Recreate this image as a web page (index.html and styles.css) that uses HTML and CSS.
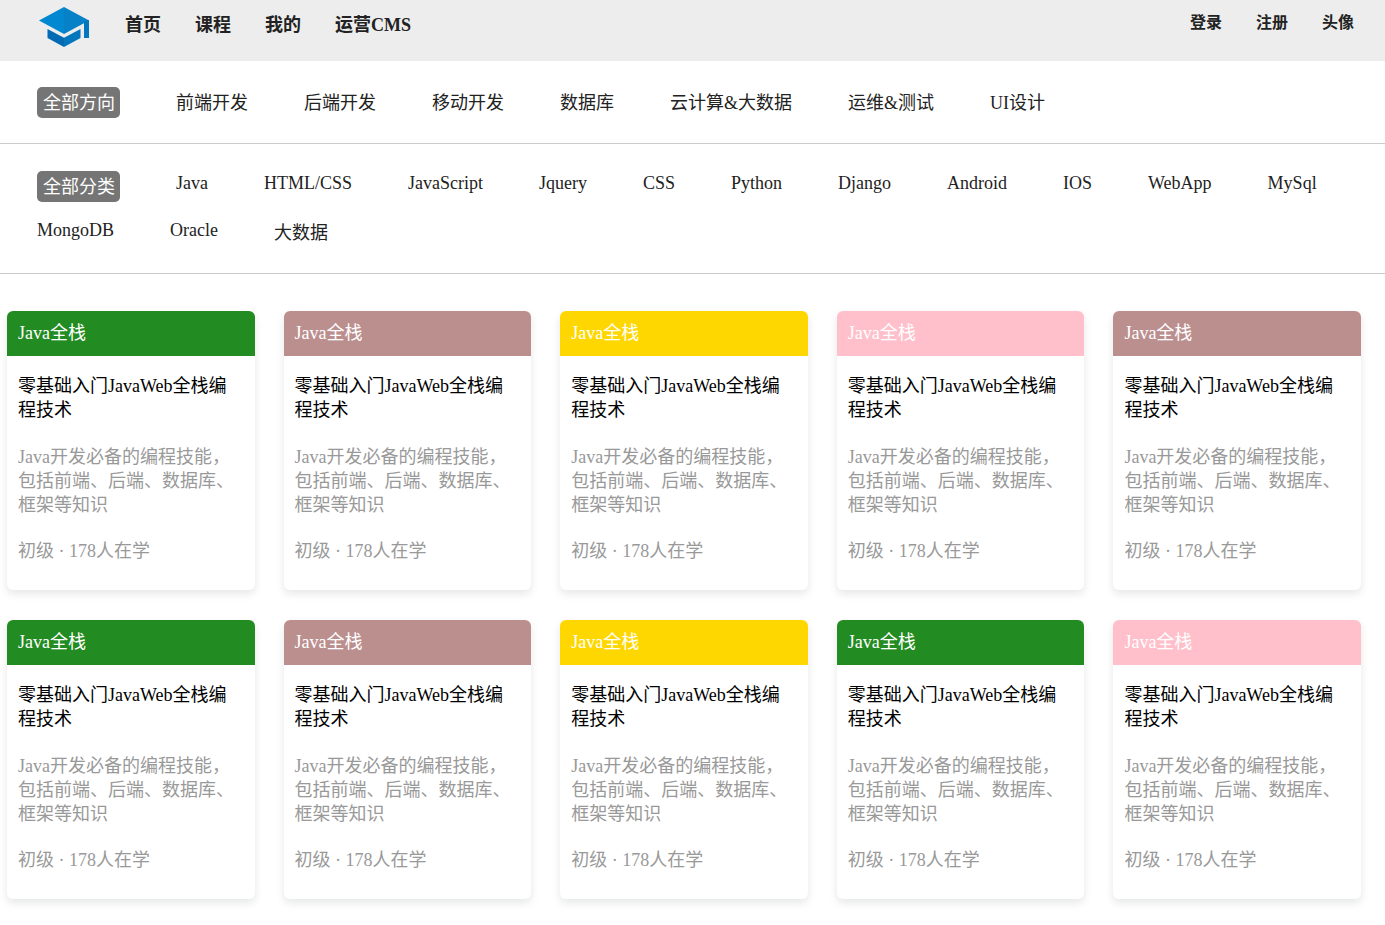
FILE: index.html
```html
<!DOCTYPE html>
<html lang="zh-CN">
<head>
<meta charset="utf-8">
<meta name="viewport" content="width=device-width, initial-scale=1">
<title>课程</title>
<link rel="stylesheet" href="styles.css">
</head>
<body>
<header class="topbar">
  <a class="logo" href="#" aria-label="首页">
    <svg width="52" height="42" viewBox="0 0 52 42" aria-hidden="true">
      <path fill="#0288d1" d="M26 1 1 14.500 26 28z"/>
      <path fill="#0680c6" d="M26 1 51 14.500 26 28z"/>
      <path fill="#0277bd" d="M46 15.500 51 14v18h-5z"/>
      <path fill="#026bb3" d="M9.500 23 26 31.800V41L9.500 32z"/>
      <path fill="#0277bd" d="M42.500 23 26 31.800V41L42.500 32z"/>
    </svg>
  </a>
  <nav class="menu">
    <a href="#">首页</a>
    <a href="#">课程</a>
    <a href="#">我的</a>
    <a href="#">运营CMS</a>
  </nav>
  <nav class="account">
    <a href="#">登录</a>
    <a href="#">注册</a>
    <a href="#">头像</a>
  </nav>
</header>

<nav class="filter directions">
  <a class="active" href="#">全部方向</a>
  <a href="#">前端开发</a>
  <a href="#">后端开发</a>
  <a href="#">移动开发</a>
  <a href="#">数据库</a>
  <a href="#">云计算&amp;大数据</a>
  <a href="#">运维&amp;测试</a>
  <a href="#">UI设计</a>
</nav>

<nav class="filter categories">
  <a class="active" href="#">全部分类</a>
  <a href="#">Java</a>
  <a href="#">HTML/CSS</a>
  <a href="#">JavaScript</a>
  <a href="#">Jquery</a>
  <a href="#">CSS</a>
  <a href="#">Python</a>
  <a href="#">Django</a>
  <a href="#">Android</a>
  <a href="#">IOS</a>
  <a href="#">WebApp</a>
  <a href="#">MySql</a>
  <a href="#">MongoDB</a>
  <a href="#">Oracle</a>
  <a class="han" href="#">大数据</a>
</nav>

<main class="courses">
  <article class="card">
    <h2 class="head green">Java全栈</h2>
    <div class="body">
      <h3 class="title">零基础入门JavaWeb全栈编程技术</h3>
      <p class="desc">Java开发必备的编程技能，包括前端、后端、数据库、框架等知识</p>
      <p class="meta">初级 · 178人在学</p>
    </div>
  </article>
  <article class="card">
    <h2 class="head brown">Java全栈</h2>
    <div class="body">
      <h3 class="title">零基础入门JavaWeb全栈编程技术</h3>
      <p class="desc">Java开发必备的编程技能，包括前端、后端、数据库、框架等知识</p>
      <p class="meta">初级 · 178人在学</p>
    </div>
  </article>
  <article class="card">
    <h2 class="head gold">Java全栈</h2>
    <div class="body">
      <h3 class="title">零基础入门JavaWeb全栈编程技术</h3>
      <p class="desc">Java开发必备的编程技能，包括前端、后端、数据库、框架等知识</p>
      <p class="meta">初级 · 178人在学</p>
    </div>
  </article>
  <article class="card">
    <h2 class="head pink">Java全栈</h2>
    <div class="body">
      <h3 class="title">零基础入门JavaWeb全栈编程技术</h3>
      <p class="desc">Java开发必备的编程技能，包括前端、后端、数据库、框架等知识</p>
      <p class="meta">初级 · 178人在学</p>
    </div>
  </article>
  <article class="card">
    <h2 class="head brown">Java全栈</h2>
    <div class="body">
      <h3 class="title">零基础入门JavaWeb全栈编程技术</h3>
      <p class="desc">Java开发必备的编程技能，包括前端、后端、数据库、框架等知识</p>
      <p class="meta">初级 · 178人在学</p>
    </div>
  </article>
  <article class="card">
    <h2 class="head green">Java全栈</h2>
    <div class="body">
      <h3 class="title">零基础入门JavaWeb全栈编程技术</h3>
      <p class="desc">Java开发必备的编程技能，包括前端、后端、数据库、框架等知识</p>
      <p class="meta">初级 · 178人在学</p>
    </div>
  </article>
  <article class="card">
    <h2 class="head brown">Java全栈</h2>
    <div class="body">
      <h3 class="title">零基础入门JavaWeb全栈编程技术</h3>
      <p class="desc">Java开发必备的编程技能，包括前端、后端、数据库、框架等知识</p>
      <p class="meta">初级 · 178人在学</p>
    </div>
  </article>
  <article class="card">
    <h2 class="head gold">Java全栈</h2>
    <div class="body">
      <h3 class="title">零基础入门JavaWeb全栈编程技术</h3>
      <p class="desc">Java开发必备的编程技能，包括前端、后端、数据库、框架等知识</p>
      <p class="meta">初级 · 178人在学</p>
    </div>
  </article>
  <article class="card">
    <h2 class="head green">Java全栈</h2>
    <div class="body">
      <h3 class="title">零基础入门JavaWeb全栈编程技术</h3>
      <p class="desc">Java开发必备的编程技能，包括前端、后端、数据库、框架等知识</p>
      <p class="meta">初级 · 178人在学</p>
    </div>
  </article>
  <article class="card">
    <h2 class="head pink">Java全栈</h2>
    <div class="body">
      <h3 class="title">零基础入门JavaWeb全栈编程技术</h3>
      <p class="desc">Java开发必备的编程技能，包括前端、后端、数据库、框架等知识</p>
      <p class="meta">初级 · 178人在学</p>
    </div>
  </article>
</main>
</body>
</html>
```

FILE: styles.css
```css
* {
  box-sizing: border-box;
}

body {
  margin: 0;
  background: #fff;
  color: #000;
  font: 18px/24px "Liberation Serif", "Noto Sans CJK SC", serif;
}

h2,
h3,
p {
  margin: 0;
  font-size: 18px;
  font-weight: 400;
}

a {
  color: #222;
  text-decoration: none;
}

.topbar {
  display: flex;
  align-items: flex-start;
  padding: 6px 31px 13px 38px;
  background: #ededed;
}

.logo svg {
  display: block;
}

.menu,
.account {
  display: flex;
  gap: 34px;
  font-weight: 700;
}

.menu {
  padding: 7px 0 0 35px;
}

.account {
  margin-left: auto;
  padding-top: 5px;
  font-size: 16px;
}

.filter {
  display: flex;
  flex-wrap: wrap;
  align-items: flex-start;
  gap: 16px 56px;
  border-bottom: 1px solid #ccc;
}

.directions {
  padding: 26px 37px 23px;
  line-height: 33px;
}

.categories {
  padding: 27px 37px 25px;
}

.filter .active {
  padding: 2px 5px 0 6px;
  border-radius: 5px;
  background: #757575;
  color: #fff;
  line-height: 29px;
}

.filter .han {
  line-height: 30px;
}

.courses {
  display: grid;
  grid-template-columns: repeat(5, 1fr);
  gap: 30px 29px;
  padding: 37px 24px 26px 7px;
}

.card {
  overflow: hidden;
  border-radius: 6px;
  background: #fff;
  box-shadow: 0 4px 8px rgba(7, 17, 27, 0.1);
}

.head {
  padding: 0 11px;
  color: #fff;
  line-height: 45px;
}

.green {
  background: #228b22;
}

.brown {
  background: #bc8f8f;
}

.gold {
  background: #ffd700;
}

.pink {
  background: #ffc0cb;
}

.body {
  padding: 18px 11px 27px;
}

.desc,
.meta {
  color: #999;
}

.desc {
  padding: 23px 0 22px;
}
```
